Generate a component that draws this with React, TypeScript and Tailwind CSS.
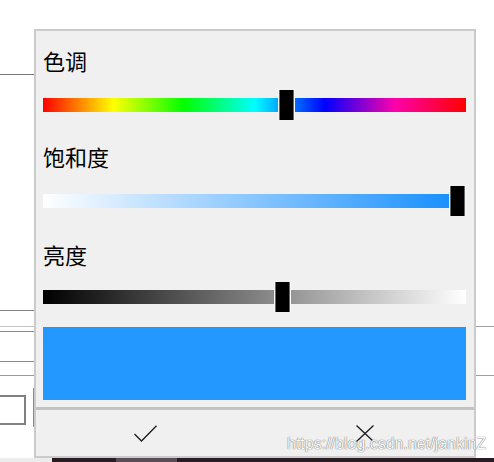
import React from "react";

const HUE =
  "bg-[linear-gradient(to_right,#ff0000_0%,#ffff00_16.67%,#00ff00_33.33%,#00ffff_50%,#0000ff_66.67%,#ff00aa_83.33%,#ff0000_100%)]";

function Thumb({ left }: { left: number }) {
  return (
    <div
      className="absolute top-0 h-[30px] w-[17px] border-x border-[#f8f8f8]"
      style={{ left }}
    >
      <div className="h-full w-full bg-black border-x border-[#666666]" />
    </div>
  );
}

function Slider({ track, left }: { track: string; left: number }) {
  return (
    <div className="relative h-[30px] pt-[8px]">
      <div className={`h-[14px] ${track}`} />
      <Thumb left={left} />
    </div>
  );
}

function Label({ text, className }: { text: string; className?: string }) {
  return (
    <div
      className={`h-[22px] text-[22px] leading-[22px] text-black ${className ?? ""}`}
      style={{ fontFamily: '"Noto Sans CJK SC", "Noto Sans", sans-serif' }}
    >
      {text}
    </div>
  );
}

export default function App() {
  return (
    <div className="relative w-[494px] h-[462px] bg-white overflow-hidden">
      <div className="flex h-[458px]">
        {/* left strip: background form behind popup */}
        <div className="w-[34px] flex flex-col">
          <div className="mt-[74px] h-px bg-[#7a7a7a]" />
          <div className="mt-[235px] h-px bg-[#808080]" />
          <div className="mt-[15px] h-px bg-[#c4c4c4]" />
          <div className="mt-[4px] h-px bg-[#8a8a8a]" />
          <div className="mt-[29px] h-px bg-[#8a8a8a]" />
          <div className="mt-[13px] h-px bg-[#9a9a9a]" />
          <div className="mt-[12px] flex">
            <div className="mt-[7px] w-[26px] h-[30px] border-y-2 border-r-2 border-[#808080]" />
            <div className="ml-[7px] w-px h-[39px] bg-[#8a8a8a]" />
          </div>
        </div>

        {/* popup panel */}
        <div className="mt-[29px] w-[442px] h-[429px] border-2 border-[#cbcbcb] bg-[#f0f0f0] flex flex-col">
          <div className="pl-[7px] pr-[8px] pt-[18px] flex flex-col">
            <Label text="色调" />
            <div className="mt-[19px]">
              <Slider track={HUE} left={235} />
            </div>
            <Label text="饱和度" className="mt-[25px]" />
            <div className="mt-[19px]">
              <Slider
                track="bg-[linear-gradient(to_right,#ffffff,#108cff)]"
                left={406}
              />
            </div>
            <Label text="亮度" className="mt-[27px]" />
            <div className="mt-[17px]">
              <Slider
                track="bg-[linear-gradient(to_right,#000000,#ffffff)]"
                left={231}
              />
            </div>
            <div className="mt-[15px] h-[73px] bg-[#2398ff]" />
          </div>
          <div className="mt-[7px] h-[3px] bg-[#c2c2c2]" />
          <div className="h-[46px] grid grid-cols-2">
            <div className="flex items-center justify-center">
              <svg width="23" height="17" viewBox="0 0 23 17" fill="none">
                <path
                  d="M0.5 9 L7.5 16 L22.5 0.8"
                  stroke="#1b1b1b"
                  strokeWidth="1.3"
                />
              </svg>
            </div>
            <div className="flex items-center justify-center">
              <svg width="18" height="17" viewBox="0 0 18 17" fill="none">
                <path
                  d="M0.5 0.5 L17.5 16.5 M17.5 0.5 L0.5 16.5"
                  stroke="#1b1b1b"
                  strokeWidth="1.3"
                />
              </svg>
            </div>
          </div>
        </div>

        {/* right strip */}
        <div className="flex-1 flex flex-col">
          <div className="mt-[326px] h-px bg-[#a0a0a0]" />
          <div className="mt-[48px] h-px bg-[#a0a0a0]" />
        </div>
      </div>

      {/* bottom strip */}
      <div className="flex h-[4px]">
        <div className="w-[52px] bg-[#ececec]" />
        <div className="w-[64px] bg-[#2a1a22]" />
        <div className="w-[61px] bg-[#5c4c54]" />
        <div className="flex-1 bg-[#2a1a22]" />
      </div>

      {/* watermark overlay */}
      <div
        className="absolute left-[287px] top-[432px] text-[16px] text-[#f8f8f8] [text-shadow:0_0_1px_rgba(0,0,0,0.6),0_0_1px_rgba(0,0,0,0.3)] whitespace-nowrap"
        style={{ fontFamily: '"Liberation Sans", Arial, sans-serif' }}
      >
        https://blog.csdn.net/jankinZ
      </div>
    </div>
  );
}
